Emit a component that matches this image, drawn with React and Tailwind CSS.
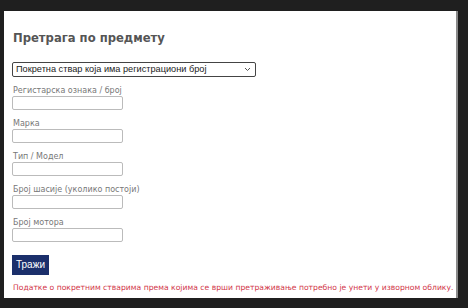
export default function App() {
  const fields = [
    "Регистарска ознака / број",
    "Марка",
    "Тип / Модел",
    "Број шасије (уколико постоји)",
    "Број мотора",
  ];
  return (
    <div className="w-[468px] h-[308px] bg-[#1f1f1f] pt-[11px] pl-[4px] overflow-hidden">
      <div className="w-[454px] h-[287px] bg-white border-r-[2px] border-[#8a8a8a] pl-[8px] pt-[19px] flex flex-col" style={{ fontFamily: '"DejaVu Sans", Verdana, sans-serif' }}>
        <h1 className="text-[11.6px] font-bold text-[#555] leading-[16px] ml-[1px]">Претрага по предмету</h1>
        <div className="mt-[16px] w-[244px] h-[15px] border border-[#444] rounded-[2px] flex items-center justify-between pl-[3px] pr-[4px]">
          <span className="text-[9.2px] text-[#222] leading-none" style={{ fontFamily: '"Liberation Sans", Arial, sans-serif' }}>Покретна ствар која има регистрациони број</span>
          <svg width="7" height="5" viewBox="0 0 7 5"><path d="M1 1 L3.5 3.5 L6 1" stroke="#555" strokeWidth="1" fill="none" /></svg>
        </div>
        <div className="flex flex-col mt-[9px] gap-[9px]">
          {fields.map((f) => (
            <div key={f} className="flex flex-col">
              <span className="text-[8px] text-[#777] leading-[10px] ml-[1px]">{f}</span>
              <div className="w-[111px] h-[14px] border border-[#bbb] rounded-[2px]" />
            </div>
          ))}
        </div>
        <div className="mt-[9px]">
          <div className="inline-flex items-center justify-center w-[37px] h-[20px] bg-[#1b2f6b] text-white text-[10px]" style={{ fontFamily: '"Liberation Sans", Arial, sans-serif' }}>Тражи</div>
        </div>
        <p className="mt-[8px] text-[7.65px] text-[#d2384a] leading-[10px] ml-[1px] whitespace-nowrap">Податке о покретним стварима према којима се врши претраживање потребно је унети у изворном облику.</p>
      </div>
    </div>
  );
}
